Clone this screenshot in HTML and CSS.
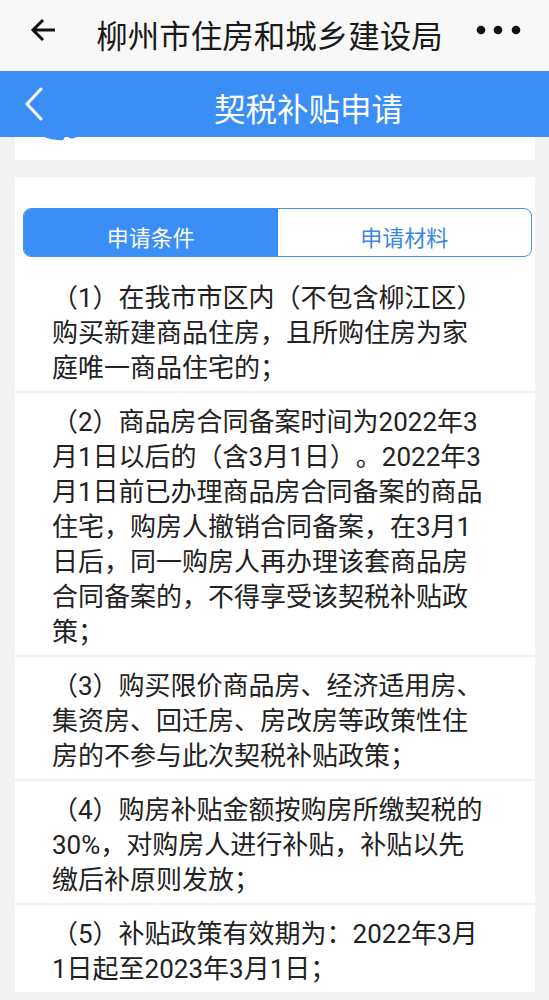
FILE: index.html
```html
<!DOCTYPE html>
<html lang="zh-CN">
<head>
    <meta charset="UTF-8">
    <meta name="viewport" content="width=device-width, initial-scale=1.0">
    <title>契税补贴申请</title>
    <link rel="stylesheet" href="styles.css">
</head>
<body>

<!-- WeChat style top bar -->
<header class="topbar">
    <svg class="topbar-back" width="30" height="30" viewBox="0 0 30 30">
        <path d="M27 15 H6 M15 5 L5 15 L15 25" fill="none" stroke="#111" stroke-width="3" stroke-linejoin="miter"/>
    </svg>
    <h1>柳州市住房和城乡建设局</h1>
    <svg class="topbar-more" width="50" height="12" viewBox="0 0 50 12">
        <circle cx="6" cy="6" r="4.3" fill="#111"/>
        <circle cx="23" cy="6" r="4.3" fill="#111"/>
        <circle cx="41" cy="6" r="4.3" fill="#111"/>
    </svg>
</header>

<!-- Page navigation -->
<div class="navbar">
    <svg class="navbar-back" width="20" height="34" viewBox="0 0 20 34">
        <path d="M17 2 L3 17 L17 32" fill="none" stroke="#fff" stroke-width="3" stroke-linecap="round" stroke-linejoin="round"/>
    </svg>
    <h2>契税补贴申请</h2>
</div>

<main class="page">

    <div class="card card-top">
        <svg width="40" height="4" viewBox="0 0 40 4">
            <path d="M1 0 Q10 4 20 3 L22 0 Z" fill="#3a8ef5"/>
            <path d="M25 0 Q29 3 33 0 Z" fill="#3a8ef5"/>
        </svg>
    </div>

    <div class="card card-main">
        <div class="tabs">
            <div class="tab active">申请条件</div>
            <div class="tab">申请材料</div>
        </div>

        <ul class="conditions">
            <li>（1）在我市市区内（不包含柳江区）购买新建商品住房，且所购住房为家庭唯一商品住宅的；</li>
            <li>（2）商品房合同备案时间为2022年3月1日以后的（含3月1日）。2022年3月1日前已办理商品房合同备案的商品住宅，购房人撤销合同备案，在3月1日后，同一购房人再办理该套商品房合同备案的，不得享受该契税补贴政策；</li>
            <li>（3）购买限价商品房、经济适用房、集资房、回迁房、房改房等政策性住房的不参与此次契税补贴政策；</li>
            <li>（4）购房补贴金额按购房所缴契税的30%，对购房人进行补贴，补贴以先缴后补原则发放；</li>
            <li>（5）补贴政策有效期为：2022年3月1日起至2023年3月1日；</li>
        </ul>
    </div>

</main>

</body>
</html>
```

FILE: styles.css
```css
body {
    margin: 0;
    padding: 0;
    background-color: #f3f3f3;
    font-family: Roboto, "Noto Sans CJK SC", sans-serif;
    color: #222;
}
.topbar {
    height: 71px;
    background-color: #f8f8f8;
    display: flex;
    align-items: center;
    justify-content: space-between;
    padding: 0 28px 0 28px;
    box-sizing: border-box;
}
.topbar h1 {
    margin: 0 0 4px 6px;
    font-size: 31.5px;
    font-weight: normal;
    color: #1a1a1a;
}
.topbar-back {
    margin-top: -12px;
}
.topbar-more {
    margin-top: -12px;
    margin-right: -4px;
}
.navbar {
    height: 66px;
    background-color: #3a8ef5;
    display: flex;
    align-items: center;
    padding-left: 24px;
}
.navbar h2 {
    margin: 6px 0 0 0;
    flex: 1;
    text-align: center;
    padding-left: 24px;
    font-size: 31.5px;
    font-weight: normal;
    color: #fff;
}
.page {
    padding: 0 14px 0 15px;
}
.card {
    background: #fff;
}
.card-top {
    height: 23px;
    margin-bottom: 17px;
    padding-left: 28px;
}
.card-top svg {
    display: block;
}
.card-main {
    padding-top: 31px;
}
.tabs {
    display: flex;
    margin: 0 3px 12px 8px;
    height: 49px;
    border: 1.5px solid #4a8fe6;
    border-radius: 8px;
    overflow: hidden;
    box-sizing: border-box;
}
.tab {
    flex: 1;
    display: flex;
    align-items: center;
    justify-content: center;
    padding-top: 6px;
    font-size: 22px;
    color: #3a86e6;
}
.tab.active {
    background-color: #3a8ef5;
    color: #fff;
}
.conditions {
    list-style: none;
    margin: 0;
    padding: 0;
}
.conditions li {
    padding: 12px 49px 5px 37px;
    font-size: 26px;
    line-height: 35px;
    text-spacing-trim: space-all;
    border-bottom: 2px solid #f1f1f1;
}
```
